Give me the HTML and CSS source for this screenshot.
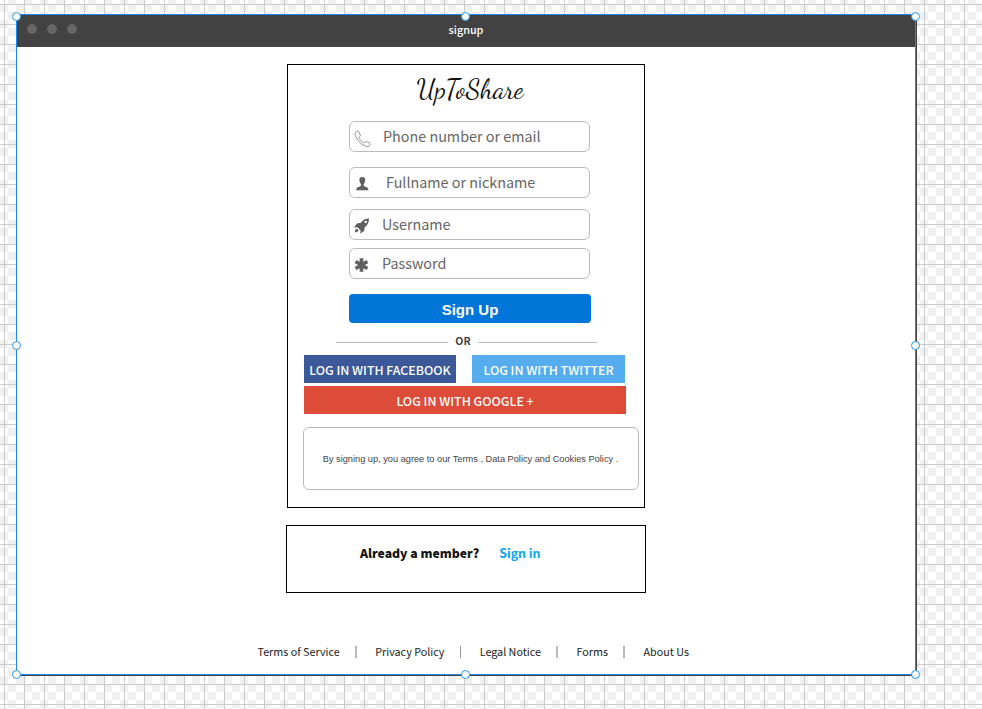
FILE: index.html
```html
<!DOCTYPE html>
<html lang="en">
<head>
<meta charset="utf-8">
<title>signup</title>
<link rel="stylesheet" href="styles.css">
</head>
<body>
<main class="window">
  <header class="titlebar">
    <div class="dots"><i></i><i></i><i></i></div>
    <span class="name">signup</span>
  </header>
  <section class="card">
    <h1 class="logo">UpToShare</h1>
    <div class="field phone">
      <svg width="18" height="18" viewBox="0 0 18 18"><path d="M2.400 1.500C1 2.100.8 4 1.500 5.800c1.600 4.200 5 8 9.300 10 2.300 1 4.500.9 5.300-.8.4-.9.2-1.300-.6-1.900l-2.300-1.300c-.8-.4-1.400-.3-2 .3-.7.8-1.300.8-2.200.2-1.600-1-3-2.500-3.800-4-.4-.8-.2-1.200.4-1.700.8-.6.9-1.100.5-2L5 2.200C4.400 1.200 3.600.9 2.400 1.500z" fill="none" stroke="#777" stroke-width=".8"/></svg>
      <span>Phone number or email</span>
    </div>
    <div class="field person">
      <svg width="18" height="18" viewBox="0 0 18 18"><path d="M8.300 2C6.300 2 5.300 3.300 5.400 5c0 1.800.7 3 1.500 3.900v1.700C6.500 12 2.700 11.900 2.300 14v1.200h12V14c-.4-2.100-4.200-2-4.600-3.400V8.900c.8-.9 1.500-2.100 1.500-3.900C11.300 3.300 10.300 2 8.300 2z" fill="#606060"/></svg>
      <span>Fullname or nickname</span>
    </div>
    <div class="field rocket">
      <svg width="18" height="18" viewBox="0 0 18 18"><path fill-rule="evenodd" d="M16 1.500c-4 .1-6 1.400-8.400 4.500l-3.400.3L1 10.500l3.300-.2 3.300 3.300-.3 3.200 4-3.100.4-3.500c3.100-2.400 4.200-4.700 4.300-8.700zM12.700 3.700a1.200 1.200 0 1 1 0 2.400 1.200 1.200 0 0 1 0-2.400zM4 11.700c-1.400.1-2 1.200-2.200 3.600 2.300-.1 3.500-.8 3.700-2.100z" fill="#606060"/></svg>
      <span>Username</span>
    </div>
    <div class="field star">
      <svg width="18" height="18" viewBox="0 0 18 18"><path d="M7.500 2.300v13.400M1.600 5.500l11.800 7M13.400 5.500l-11.800 7" stroke="#606060" stroke-width="3.700"/></svg>
      <span>Password</span>
    </div>
    <button class="signup">Sign Up</button>
    <div class="or"><hr><span>OR</span><hr></div>
    <div class="social">
      <button class="fb">LOG IN WITH FACEBOOK</button>
      <button class="tw">LOG IN WITH TWITTER</button>
      <button class="gg">LOG IN WITH GOOGLE +</button>
    </div>
    <p class="legal">By signing up, you agree to our Terms , Data Policy and Cookies Policy .</p>
  </section>
  <section class="member"><b>Already a member?</b><a>Sign in</a></section>
  <footer>
    <a>Terms of Service</a><i></i><a>Privacy Policy</a><i class="thin"></i><a>Legal Notice</a><i></i><a>Forms</a><i></i><a>About Us</a>
  </footer>
  <b class="handle n w"></b><b class="handle n c"></b><b class="handle n e"></b>
  <b class="handle m w"></b><b class="handle m e"></b>
  <b class="handle s w"></b><b class="handle s c"></b><b class="handle s e"></b>
</main>
</body>
</html>
```
FILE: styles.css
```css
* { box-sizing: border-box; }
body {
  margin: 0; height: 709px; overflow: hidden; padding: 14px 0 0 16px;
  font-family: "Noto Sans CJK SC", sans-serif;
  background:
    linear-gradient(90deg, #ccc 1px, transparent 1px) 4px 0 / 20px 20px,
    linear-gradient(#ccc 1px, transparent 1px) 0 4px / 20px 20px,
    repeating-conic-gradient(#f0f0f0 0 25%, #fff 0 50%) 0 12px / 16px 16px;
}
.window {
  position: relative; width: 901px; height: 662px; background: #fff;
  border: 1px solid #1e87f8; border-right: 2px solid #444; border-bottom: 2px solid #444;
  display: flex; flex-direction: column; align-items: center;
}
.window::after { content: ""; position: absolute; inset: -1px; border: 1px solid #1e87f8; }
.titlebar { align-self: stretch; height: 32px; flex: none; background: #424242; color: #fff; display: flex; justify-content: center; }
.dots { display: flex; gap: 10px; width: 100px; padding: 9px 0 0 10.4px; margin-right: auto; }
.dots i { width: 10px; height: 10px; border-radius: 50%; background: #666; }
.name { width: 100px; margin-right: auto; transform: translateX(-50px); font-size: 10.8px; font-weight: 500; line-height: 28px; text-align: center; }
.card { width: 358px; height: 444px; flex: none; margin: 17px 0 0 0; border: 1px solid #000; padding: 0 0 0 15px; display: flex; flex-direction: column; }
.logo { margin: 7px 0 0 113.5px; height: 37px; width: 112px; font: 400 27px/36px "Dancing Script", cursive; color: #111; white-space: nowrap; }
.field { display: flex; align-items: center; width: 241px; height: 31px; flex: none; margin: 0 0 0 46px; border: 1px solid #bbb; border-radius: 6px; color: #666; font-size: 14.35px; line-height: 27px; padding: 0 0 0 4px; white-space: nowrap; }
.field span { padding-bottom: 2px; }
.field svg { flex: none; margin-top: 2px; }
.phone { margin-top: 12px; }
.field.phone svg { margin: 4px 0 0 -.5px; }
.phone span { margin-left: 11.5px; }
.person { margin-top: 15px; }
.person span { margin-left: 14px; }
.rocket { margin-top: 11px; }
.rocket span { margin-left: 11px; }
.field.rocket svg { margin-left: -1px; }
.star { margin-top: 8px; }
.star span { margin-left: 10px; }
button { border: 0; padding: 0; color: #fff; font-family: inherit; white-space: nowrap; }
.signup { width: 242px; height: 29px; flex: none; margin: 15px 0 0 46px; border-radius: 4px; background: #0275d8; font: bold 15px/29px "Liberation Sans", sans-serif; padding-top: 1px; }
.or { display: flex; align-items: center; margin: 9px 0 0 33px; width: 261px; height: 20px; font-size: 10.6px; font-weight: 700; color: #444; }
.or hr { margin: 0; border: 0; height: 1px; background: #bbb; width: 112px; }
.or span { width: 30px; text-align: center; padding-bottom: 4px; }
.or hr:last-child { width: 119px; }
.social { display: grid; grid-template-columns: 152px 153px; column-gap: 16px; row-gap: 3px; margin: 3px 0 0 1px; width: 322px; }
.social button { height: 28px; font-size: 12.35px; font-weight: 500; line-height: 26px; padding-top: 2px; }
.fb { background: #3b5998; }
.tw { background: #55acee; }
.gg { background: #dd4b39; grid-column: 1 / 3; width: 322px; }
.legal { margin: 13px 0 0 0; width: 336px; height: 63px; border: 1px solid #bbb; border-radius: 6px; padding-right: 1px; font: 9.22px/62px "Liberation Sans", sans-serif; color: #444; text-align: center; white-space: nowrap; }
.member { width: 360px; height: 68px; flex: none; margin-top: 17px; border: 1px solid #000; display: flex; gap: 20px; padding: 17px 0 0 73px; font-size: 12.2px; line-height: 20px; font-weight: 700; color: #111; white-space: nowrap; }
.member a { color: #08a5f8; font-size: 12.4px; }
footer { align-self: stretch; display: flex; align-items: center; margin: 48px 0 0 240.5px; height: 20px; font-size: 10.75px; color: #222; white-space: nowrap; }
footer i { width: 2px; height: 12px; background: #bbb; margin: 2px 18.3px 0 15.3px; }
footer i.thin { width: 1px; background: #999; margin-left: 16px; }
.handle { position: absolute; z-index: 2; width: 9px; height: 9px; border: 1px solid #2196f3; border-radius: 50%; background: #fff; }
.n { top: -3px; }
.m { top: 326px; }
.s { top: 655px; }
.w { left: -5px; }
.c { left: 444px; }
.e { left: 894px; }
```
